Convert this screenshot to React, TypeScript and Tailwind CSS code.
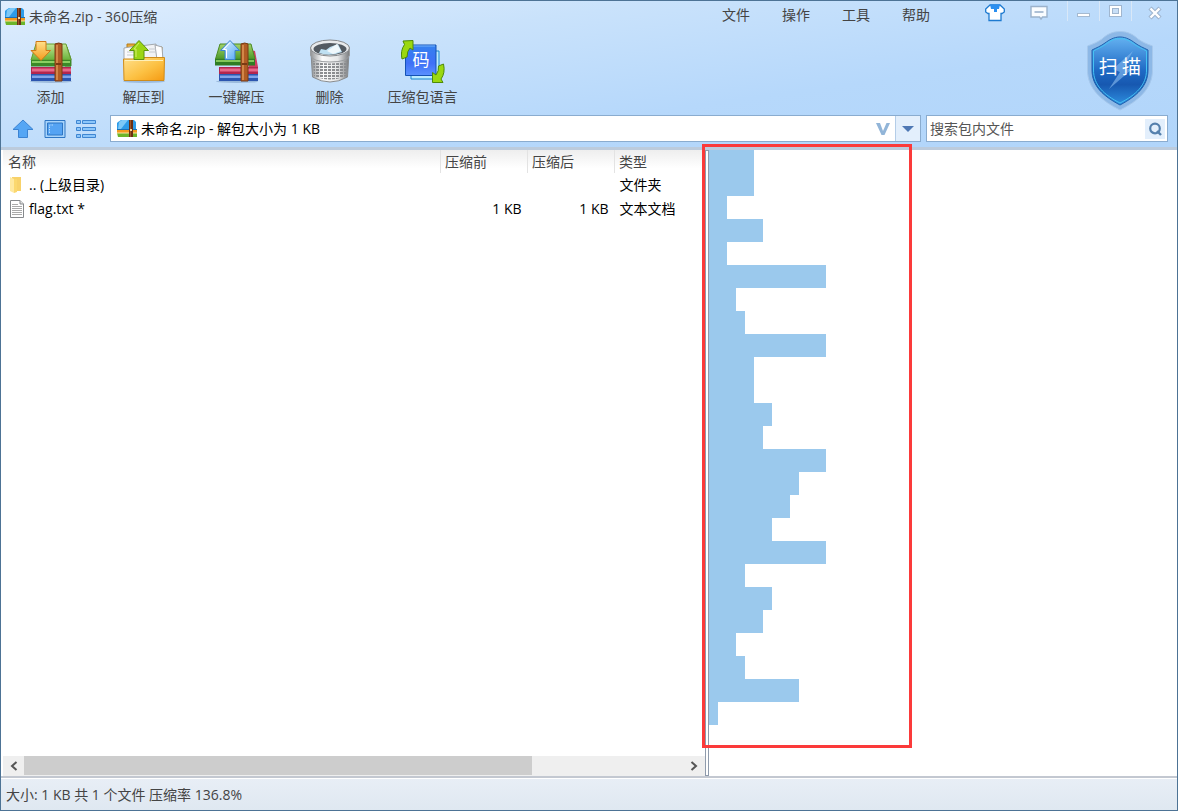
import React from "react";

function BooksIcon({ className }: { className: string }) {
  return (
    <svg viewBox="0 0 20 20" className={className} aria-hidden="true">
      <path d="M1 3 L4 1 H17 L19 3 V11 H0 V4Z" fill="#2d9be8" />
      <path d="M2 3 L5 1 H11 L4 10 H1Z" fill="#7cc8f7" />
      <path d="M0 10 H20 V14 H0Z" fill="#f39a1d" />
      <path d="M0 10 H20 V11 H0Z" fill="#1c6fb5" />
      <path d="M0 14 H20 V18 H1Z" fill="#6cb52a" />
      <path d="M0 13.5 H20 V14.5 H0Z" fill="#fbe3a0" />
      <path d="M12 1 H16 V18 H12Z" fill="#6b3013" />
      <path d="M13 1 H14 V18 H13Z" fill="#9c552a" />
      <path d="M13 10 H15 V12 H13Z" fill="#f0d9a0" />
    </svg>
  );
}

function Stack({ slim }: { slim?: boolean }) {
  return (
    <>
      <ellipse cx="22" cy="42.5" rx="21" ry="1.5" fill="#6f93bd" opacity=".5" />
      <path d={slim ? "M4 35 H43 V42 H4Z" : "M2 35 H42 V42 H2Z"} fill="#2c56b0" />
      <path d={slim ? "M5 36.5 H43 V39 H5Z" : "M3 36.5 H42 V39 H3Z"} fill="#7fa4ea" />
      <path d={slim ? "M4 28 H43 V35 H4Z" : "M2 28 H42 V35 H2Z"} fill="#b3264e" />
      <path d={slim ? "M5 29.5 H43 V32.5 H5Z" : "M3 29.5 H42 V32.5 H3Z"} fill="#e8688a" />
    </>
  );
}

function Belt() {
  return (
    <>
      <path d="M26 5 Q30 3 33 5 V42 H26Z" fill="#b05c24" stroke="#7a3a14" />
      <path d="M28 6 V41" stroke="#dc9252" strokeWidth="1.6" />
      <path d="M27 24 H32 V26 H27Z" fill="#7a3a14" />
    </>
  );
}

function AddIcon() {
  return (
    <svg viewBox="0 0 44 44" className="h-11 w-11" aria-hidden="true">
      <defs>
        <linearGradient id="addGreen" x1="0" y1="0" x2="0" y2="1">
          <stop offset="0" stopColor="#c4e696" />
          <stop offset="1" stopColor="#68b23a" />
        </linearGradient>
        <linearGradient id="addArrow" x1="0" y1="0" x2="0" y2="1">
          <stop offset="0" stopColor="#ffe08a" />
          <stop offset="1" stopColor="#f49a1c" />
        </linearGradient>
      </defs>
      <Stack />
      <path d="M38 8 L42 20 V27 H36Z" fill="#c5dda8" stroke="#4e8a2c" />
      <path d="M7 5 H37 L42 21 H2Z" fill="url(#addGreen)" stroke="#669d2f" />
      <path d="M2 21 H42 V27.5 H2Z" fill="#3b8a28" />
      <path d="M3 23 H41" stroke="#8bcf62" strokeWidth="2" />
      <Belt />
      <path d="M7 2.5 H17 V11.5 H21.5 L12 21.5 L2 11.5 H7Z" fill="url(#addArrow)" stroke="#d07817" />
    </svg>
  );
}

function ExtractIcon() {
  return (
    <svg viewBox="0 0 44 44" className="h-11 w-11" aria-hidden="true">
      <defs>
        <linearGradient id="folderFront" x1="0" y1="0" x2="1" y2="1">
          <stop offset="0" stopColor="#ffe08c" />
          <stop offset=".55" stopColor="#fcc143" />
          <stop offset="1" stopColor="#f59a12" />
        </linearGradient>
      </defs>
      <ellipse cx="22" cy="42.5" rx="21" ry="1.5" fill="#6f93bd" opacity=".5" />
      <path d="M5 5 H13 L15 8 H40 V20 H5Z" fill="#e6a93a" stroke="#b57c1b" />
      <path d="M2 9 L14 7 L16 22 H2Z" fill="#fafafa" stroke="#a3a8ad" />
      <path d="M18 7 L34 5 L36 21 H18Z" fill="#f1f3f5" stroke="#a3a8ad" />
      <path d="M33 6 L40 8 L41 21 H35Z" fill="#fff" stroke="#a3a8ad" />
      <path d="M5 13 H13 M5 16 H13 M27 10 H34 M27 13 H34" stroke="#c6cacf" />
      <path d="M1.5 20 L14 20 L16 18.500 H42.500 L42 41.500 H2Z" fill="url(#folderFront)" stroke="#cf8c1a" />
      <path d="M3 21.500 H41" stroke="#fff0b8" />
      <path d="M12 20.500 V11.500 H7.500 L17 1.500 L26.500 11.500 H22 V20.500Z" fill="#9bd514" stroke="#5d930d" />
      <path d="M14 18 V10 H12 L17 4" fill="none" stroke="#d4f06c" />
    </svg>
  );
}

function OneClickIcon() {
  return (
    <svg viewBox="0 0 44 44" className="h-11 w-11" aria-hidden="true">
      <defs>
        <linearGradient id="oneGreen" x1="0" y1="0" x2="0" y2="1">
          <stop offset="0" stopColor="#a5d36a" />
          <stop offset="1" stopColor="#4a9a2a" />
        </linearGradient>
        <linearGradient id="oneArrow" x1="0" y1="0" x2="1" y2="1">
          <stop offset="0" stopColor="#e5f5ff" />
          <stop offset="1" stopColor="#4ea5f5" />
        </linearGradient>
      </defs>
      <path d="M35 11 L40 12 L43 28 H34Z" fill="#cf3d63" />
      <Stack slim />
      <path d="M5 5 H36 L40 20 H0.500Z" fill="url(#oneGreen)" stroke="#4a8b24" />
      <path d="M0 20 H40 V26.500 H0Z" fill="#2f7d24" />
      <path d="M1 22 H39" stroke="#83c65a" strokeWidth="2" />
      <Belt />
      <path d="M10 20.500 V11.500 H5.500 L15 1.500 L24.500 11.500 H20 V20.500Z" fill="url(#oneArrow)" stroke="#3c83cf" />
      <path d="M11.500 19 V10.500 H8.500 L15 3.500" fill="none" stroke="#fff" />
    </svg>
  );
}

function TrashIcon() {
  return (
    <svg viewBox="0 0 44 44" className="h-11 w-11" aria-hidden="true">
      <defs>
        <linearGradient id="bin" x1="0" y1="0" x2="1" y2="0">
          <stop offset="0" stopColor="#8f9193" />
          <stop offset=".3" stopColor="#fbfbfb" />
          <stop offset=".7" stopColor="#e6e7e8" />
          <stop offset="1" stopColor="#77797b" />
        </linearGradient>
        <pattern id="holes" width="4" height="3" patternUnits="userSpaceOnUse">
          <path d="M0 0 H3 V2 H0Z" fill="#8b8d90" />
        </pattern>
      </defs>
      <path d="M3 14 H41 L39.500 38 Q22 48 4.500 38Z" fill="url(#bin)" stroke="#898c8f" />
      <path d="M5 22 Q22 27 39 22 L38 37 Q22 44 6 37Z" fill="url(#holes)" />
      <path d="M2.500 8 V16 Q4 23 22 23 Q40 23 41.500 16 V8Z" fill="url(#bin)" stroke="#999c9f" />
      <ellipse cx="22" cy="9" rx="19.500" ry="8" fill="#e8eaec" stroke="#86898c" />
      <ellipse cx="22" cy="10" rx="16.500" ry="6" fill="#535a61" />
      <path d="M11 14 L13 10 L18 11 L22 8 L30 5 L34 13 Q22 18 11 14Z" fill="#bfe0f2" />
      <path d="M19 12 L29 5 L33 12 L25 15Z" fill="#f0f8fc" />
    </svg>
  );
}

function LanguageIcon() {
  return (
    <svg viewBox="0 0 44 44" className="h-11 w-11" aria-hidden="true">
      <defs>
        <linearGradient id="code" x1="0" y1="0" x2="0" y2="1">
          <stop offset="0" stopColor="#3481ef" />
          <stop offset=".6" stopColor="#3f70f6" />
          <stop offset="1" stopColor="#5b92ff" />
        </linearGradient>
      </defs>
      <path d="M10 12 H38 V40 H10Z" fill="#bcecff" stroke="#1686d0" />
      <path d="M4.500 6 H35 V36.500 H4.500Z" fill="url(#code)" stroke="#1552b4" />
      <path d="M5.500 7 H34" stroke="#75b1fb" />
      <text x="20" y="26.500" textAnchor="middle" fontSize="17" fill="#fff" className="font-['Noto_Sans_CJK_SC',sans-serif]">码</text>
      <path d="M2 2 L12 1.500 V11 L9 9 Q6 12 6 18 L1 20 Q-1 12 3.500 5.500Z" fill="#9bd80f" stroke="#4e8a08" />
      <path d="M42 43.500 L31.500 43.500 V33.500 L35 36 Q38 32 37.500 27 L42.500 25 Q44.500 34 40 40Z" fill="#9bd80f" stroke="#4e8a08" />
    </svg>
  );
}

function ShieldIcon() {
  return (
    <svg viewBox="0 0 66 80" className="h-20 w-[66px]" aria-hidden="true">
      <defs>
        <linearGradient id="shield" x1="0" y1="0" x2="0" y2="1">
          <stop offset="0" stopColor="#65b2f1" />
          <stop offset=".5" stopColor="#1e69c4" />
          <stop offset=".7" stopColor="#1758b0" />
          <stop offset="1" stopColor="#2e8fe0" />
        </linearGradient>
      </defs>
      <path d="M33 0.500 C41 0.500 47 4 51 8 C55 11 60 13 65.500 15 V39 C65.500 58 51 70 33 79 C15 70 0.500 58 0.500 39 V15 C6 13 11 11 15 8 C19 4 25 0.500 33 0.500Z" fill="#8db8e6" stroke="#a6c8ec" />
      <path d="M33 6 C39 6 44 9 48 12 C52 15 57 17 61 19 V39 C61 55 50 65 33 74 C16 65 5 55 5 39 V19 C9 17 14 15 18 12 C22 9 27 6 33 6Z" fill="url(#shield)" stroke="#1d63b0" />
      <path d="M33 7.500 C39 7.500 43 10 47 13 C51 16 56 18 59.500 20 V39 C59.500 54 49 64 33 72 C17 64 6.500 54 6.500 39 V20 C10 18 15 16 19 13 C23 10 27 7.500 33 7.500Z" fill="none" stroke="#45c2f3" />
      <path d="M46 20 L26 38 L33 41 L22 58 L44 39 L37 36Z" fill="#8abcf0" opacity=".6" />
      <text x="33" y="43" textAnchor="middle" fontSize="19" fill="#fff" className="font-['Noto_Sans_CJK_SC',sans-serif]">扫 描</text>
    </svg>
  );
}

function UpIcon() {
  return (
    <svg viewBox="0 0 22 20" className="h-5 w-[22px]" aria-hidden="true">
      <path d="M11 1 L21 10.500 H15.500 V18.500 H6.500 V10.500 H1Z" fill="#55a6f4" stroke="#3b83d2" />
    </svg>
  );
}

function ScreenIcon() {
  return (
    <svg viewBox="0 0 22 20" className="h-5 w-[22px]" aria-hidden="true">
      <path d="M1 1.500 H21 V18.500 H1Z" fill="#a8d4fb" stroke="#2e76c4" />
      <path d="M3.500 4 H18.500 V16 H3.500Z" fill="#55a3f3" stroke="#2e76c4" />
      <path d="M5.500 14 V6 H9" fill="none" stroke="#b8dcfc" strokeDasharray="1.500 1" />
    </svg>
  );
}

function ListIcon() {
  return (
    <svg viewBox="0 0 20 20" className="h-5 w-5" aria-hidden="true">
      <g fill="#8cc6fa" stroke="#3f86d2">
        <path d="M.5 1.500 H4.500 V4.500 H.5Z M6.500 1.500 H19.500 V4.500 H6.500Z" />
        <path d="M.5 8.500 H4.500 V11.500 H.5Z M6.500 8.500 H19.500 V11.500 H6.500Z" />
        <path d="M.5 15.500 H4.500 V18.500 H.5Z M6.500 15.500 H19.500 V18.500 H6.500Z" />
      </g>
    </svg>
  );
}

function ShirtIcon() {
  return (
    <svg viewBox="0 0 20 18" className="h-[18px] w-5" aria-hidden="true">
      <path d="M5 1 L0.700 5 V8 L3 9.500 H4 V16.500 H16 V9.500 H17 L19.300 8 V5 L15 1 Z" fill="#fff" stroke="#1d7ad0" strokeWidth="1.300" />
      <path d="M5 .5 H15 L14 5 H12 V8 H9 V5 H6Z" fill="#2a8ff0" />
    </svg>
  );
}

function CommentIcon() {
  return (
    <svg viewBox="0 0 18 16" className="h-4 w-[18px]" aria-hidden="true">
      <path d="M1 1.500 H17 V12 H12.500 L11 14 L9.500 12 H1Z" fill="#fafdff" stroke="#9bb2cc" strokeWidth="1.400" />
      <path d="M4.500 7 H13.500" stroke="#9bb2cc" strokeWidth="1.600" />
    </svg>
  );
}

function FolderIcon() {
  return (
    <svg viewBox="0 0 14 18" className="h-[18px] w-3.5" aria-hidden="true">
      <path d="M3 1 H12 V15 H3Z" fill="#f8d26a" />
      <path d="M1 1 L5 3 V17 L1 15Z" fill="#ffe9a0" />
      <path d="M5 3 H8 V16 L5 17Z" fill="#fbd86f" />
    </svg>
  );
}

function TextFileIcon() {
  return (
    <svg viewBox="0 0 16 18" className="h-[18px] w-4" aria-hidden="true">
      <path d="M1.500 .5 H11 L14.500 4 V17.500 H1.500Z" fill="#fff" stroke="#86898c" />
      <path d="M11 .5 V4 H14.500" fill="#e3e3e3" stroke="#86898c" />
      <path d="M3 4.500 H9 M3 6.500 H13 M3 8.500 H13 M3 10.500 H13 M3 12.500 H13 M3 14.500 H13" stroke="#aaa" />
    </svg>
  );
}

const menus = ["文件", "操作", "工具", "帮助"];

const tools = [
  { label: "添加", icon: <AddIcon /> },
  { label: "解压到", icon: <ExtractIcon /> },
  { label: "一键解压", icon: <OneClickIcon /> },
  { label: "删除", icon: <TrashIcon /> },
  { label: "压缩包语言", icon: <LanguageIcon /> },
];

const files = [
  { name: ".. (上级目录)", icon: <FolderIcon />, before: "", after: "", type: "文件夹" },
  { name: "flag.txt *", icon: <TextFileIcon />, before: "1 KB", after: "1 KB", type: "文本文档" },
];

// Selected blanks on each line of the archive comment
const commentLines = [5, 5, 2, 6, 2, 13, 3, 4, 13, 5, 5, 7, 6, 13, 10, 9, 7, 13, 4, 7, 6, 3, 4, 10, 1];
const blankWidth = 9;

const divider = "border-l border-[#d9e8f8]";

export default function App() {
  return (
    <div className="flex h-screen flex-col border border-[#4d7395] bg-[#b4d7fa] font-['Open_Sans','Noto_Sans_CJK_SC',sans-serif] text-sm text-[#444]">
      <header className="bg-[linear-gradient(172deg,#e0eefe_0%,#c9e2fb_30%,#b6d8fb_65%,#b1d5fa_100%)]">
        <div className="flex h-[30px] items-start">
          <h1 className="flex grow items-center gap-1 pt-1.5 pl-1">
            <BooksIcon className="h-5 w-5" />
            <span className="leading-5">未命名.zip - 360压缩</span>
          </h1>
          <nav className="flex gap-8 pt-1 pr-[49px]">
            {menus.map((menu) => (
              <button key={menu} className="leading-5">{menu}</button>
            ))}
          </nav>
          <button aria-label="皮肤" className="mr-3 flex h-6 w-8 items-center justify-center"><ShirtIcon /></button>
          <button aria-label="反馈" className="mr-3 flex h-6 w-8 items-center justify-center"><CommentIcon /></button>
          <button aria-label="最小化" className={`flex h-5 w-8 items-center justify-center ${divider}`}>
            <span className="mt-2 h-1 w-[13px] border border-[#a5bad1] bg-white" />
          </button>
          <button aria-label="最大化" className={`flex h-5 w-8 items-center justify-center ${divider}`}>
            <span className="flex h-3 w-[13px] border border-[#a0b6cf] bg-white p-0.5">
              <span className="grow border border-[#a0b6cf] bg-[#c8dff7]" />
            </span>
          </button>
          <button aria-label="关闭" className={`flex h-5 w-[46px] items-center justify-center ${divider}`}>
            <svg viewBox="0 0 14 14" className="mt-1 h-3.5 w-3.5" aria-hidden="true">
              <path d="M2 2 L12 12 M12 2 L2 12" stroke="#9eb4cd" strokeWidth="4.500" />
              <path d="M2.500 2.500 L11.500 11.500 M11.500 2.500 L2.500 11.500" stroke="#fff" strokeWidth="2.400" />
            </svg>
          </button>
        </div>

        <div className="flex h-20 justify-between pr-6 pl-[3px]">
          <div className="flex">
            {tools.map((tool) => (
              <button key={tool.label} className="flex w-[93px] flex-col items-center gap-1 pt-2">
                {tool.icon}
                <span className="leading-5 whitespace-nowrap">{tool.label}</span>
              </button>
            ))}
          </div>
          <button aria-label="扫描" className="self-start"><ShieldIcon /></button>
        </div>

        <div className="flex items-center pt-1 pr-[9px] pb-[5px] pl-[11px]">
          <div className="flex w-[98px] gap-2.5">
            <button aria-label="上级目录"><UpIcon /></button>
            <button aria-label="视图"><ScreenIcon /></button>
            <button aria-label="列表"><ListIcon /></button>
          </div>
          <div className="mr-[5px] flex h-[27px] grow items-center border border-[#8aaccf] bg-white pl-1.5 text-black">
            <BooksIcon className="h-5 w-5" />
            <input
              aria-label="地址"
              defaultValue="未命名.zip - 解包大小为 1 KB"
              className="ml-1 h-5 min-w-0 grow leading-5 outline-none"
            />
            <svg viewBox="0 0 16 14" className="mr-1 h-3.5 w-4" aria-hidden="true">
              <path d="M1 1 H5 L8 9 L11.500 1 H15 L9.500 13 H6.500Z" fill="#92b5d8" />
            </svg>
            <button aria-label="展开" className="flex h-full w-[25px] items-center justify-center border-l border-[#b4cde8] bg-[#e3effc]">
              <svg viewBox="0 0 12 6" className="h-1.5 w-3" aria-hidden="true">
                <path d="M0 0 H12 L6 6Z" fill="#4e78b4" />
              </svg>
            </button>
          </div>
          <div className="flex h-[27px] w-[242px] items-center border border-[#8aaccf] bg-white pr-0.5 pl-[3px]">
            <input
              aria-label="搜索包内文件"
              placeholder="搜索包内文件"
              className="h-5 min-w-0 grow leading-5 outline-none placeholder:text-[#555]"
            />
            <button aria-label="搜索" className="flex h-5 w-5 items-center justify-center bg-[#e3effc]">
              <svg viewBox="0 0 14 14" className="h-3.5 w-3.5" aria-hidden="true">
                <circle cx="7" cy="6.500" r="4.800" fill="none" stroke="#5580ad" strokeWidth="2.200" />
                <path d="M9 9 L13 13" stroke="#5580ad" strokeWidth="2.400" />
              </svg>
            </button>
          </div>
        </div>
      </header>

      <main className="flex min-h-0 grow border-t-3 border-b-2 border-t-[#bccbdc] border-b-[#c3c8d1] bg-white pl-0.5">
        <section className="flex min-w-0 flex-[701] flex-col">
          <div className="grow overflow-hidden">
            <table className="w-full table-fixed border-collapse">
              <colgroup>
                <col />
                <col className="w-[87px]" />
                <col className="w-[87px]" />
                <col className="w-[90px]" />
              </colgroup>
              <thead className="bg-linear-to-b from-[#eeeeee] to-white to-80%">
                <tr className="h-[23px] text-left">
                  <th className="pl-[5px] leading-5 font-normal">名称</th>
                  <th className="border-l border-[#e3e3e3] pl-1 leading-5 font-normal">压缩前</th>
                  <th className="border-l border-[#e3e3e3] pl-1 leading-5 font-normal">压缩后</th>
                  <th className="border-l border-[#e3e3e3] pl-1 leading-5 font-normal">类型</th>
                </tr>
              </thead>
              <tbody className="text-black">
                {files.map((file) => (
                  <tr key={file.name} className="h-6">
                    <td className="pl-1.5 leading-5">
                      <span className="flex items-center">
                        <span className="w-5">{file.icon}</span>
                        {file.name}
                      </span>
                    </td>
                    <td className="pr-1.5 text-right leading-5">{file.before}</td>
                    <td className="pr-1.5 text-right leading-5">{file.after}</td>
                    <td className="pl-[5px] leading-5">{file.type}</td>
                  </tr>
                ))}
              </tbody>
            </table>
          </div>
          <div className="flex h-5 items-center bg-[#efefef]">
            <button aria-label="向左滚动" className="flex h-full w-[21px] items-center justify-center">
              <svg viewBox="0 0 8 10" className="h-2.5 w-2" aria-hidden="true">
                <path d="M6.500 1 L2 5 L6.500 9" fill="none" stroke="#555" strokeWidth="2" />
              </svg>
            </button>
            <div className="h-full grow">
              <div className="h-[19px] w-[77%] bg-[#cdcdcd]" />
            </div>
            <button aria-label="向右滚动" className="flex h-full w-[21px] items-center justify-center">
              <svg viewBox="0 0 8 10" className="h-2.5 w-2" aria-hidden="true">
                <path d="M1.500 1 L6 5 L1.500 9" fill="none" stroke="#555" strokeWidth="2" />
              </svg>
            </button>
          </div>
        </section>
        <div className="w-1 border border-[#8f9bac]" />
        <section className="relative min-w-0 flex-[468]">
          {commentLines.map((count, index) => (
            <div key={index} className="h-[23px] bg-[#9bc9ed]" style={{ width: count * blankWidth }} />
          ))}
          <div className="absolute -top-1.5 bottom-7 -left-[7px] w-[210px] border-[3px] border-[#fb3a3a]" />
        </section>
      </main>

      <footer className="flex h-8 items-center border-t border-white bg-linear-to-b from-[#e8eef6] to-[#dfe8f1] pl-[5px] leading-5">
        大小: 1 KB 共 1 个文件 压缩率 136.8%
      </footer>
    </div>
  );
}
